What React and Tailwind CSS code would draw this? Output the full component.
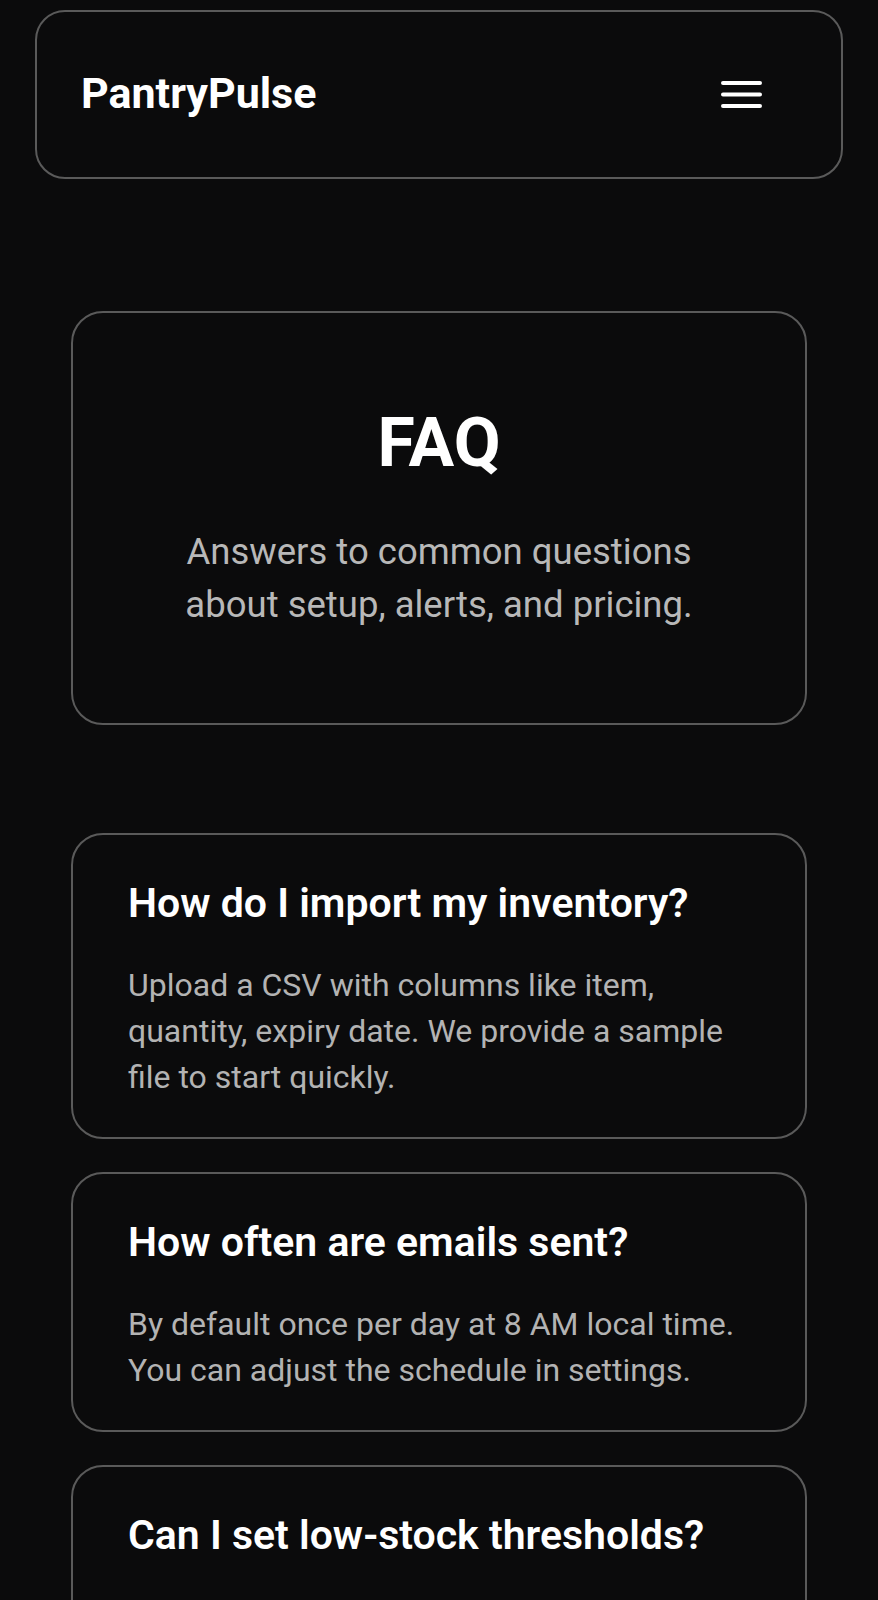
import React from "react";

const faqs = [
  {
    q: "How do I import my inventory?",
    a: "Upload a CSV with columns like item, quantity, expiry date. We provide a sample file to start quickly.",
  },
  {
    q: "How often are emails sent?",
    a: "By default once per day at 8 AM local time. You can adjust the schedule in settings.",
  },
  {
    q: "Can I set low-stock thresholds?",
    a: "Yes. Set a minimum quantity per item and we will alert you before you run out.",
  },
];

export default function App() {
  return (
    <div
      className="min-h-screen bg-[#0b0b0c] text-white pb-10"
      style={{ fontFamily: "Roboto, 'Noto Sans', 'Liberation Sans', sans-serif" }}
    >
      <header className="mx-[35px] pt-[10px]">
        <div className="h-[169px] rounded-[30px] border-2 border-[#5a5a5a] flex items-center justify-between pl-[44px] pr-[79px]">
          <span className="text-[43px] leading-none font-bold -mt-[2px]">PantryPulse</span>
          <button aria-label="Menu" className="block">
            <svg width="41" height="27" viewBox="0 0 41 27" fill="none">
              <path d="M2 2H39M2 13.5H39M2 25H39" stroke="white" strokeWidth="4" strokeLinecap="round" />
            </svg>
          </button>
        </div>
      </header>

      <main className="mx-[71px] mt-[132px]">
        <section className="rounded-[32px] border-2 border-[#5a5a5a] pt-[96px] pb-[92px] flex flex-col items-center text-center">
          <h1 className="text-[68px] leading-none font-bold">FAQ</h1>
          <p className="mt-[48px] max-w-[560px] text-[36.5px] leading-[53px] text-[#b8b8b8]">
            Answers to common questions about setup, alerts, and pricing.
          </p>
        </section>

        <div className="mt-[108px] flex flex-col gap-[33px]">
          {faqs.map((f) => (
            <article
              key={f.q}
              className="rounded-[32px] border-2 border-[#5a5a5a] pt-[45px] pb-[37px] pl-[55px] pr-[50px]"
            >
              <h2 className="text-[41px] leading-[46px] font-semibold">{f.q}</h2>
              <p className="mt-[36px] text-[32px] leading-[46px] text-[#b3b3b3]">{f.a}</p>
            </article>
          ))}
        </div>
      </main>
    </div>
  );
}
